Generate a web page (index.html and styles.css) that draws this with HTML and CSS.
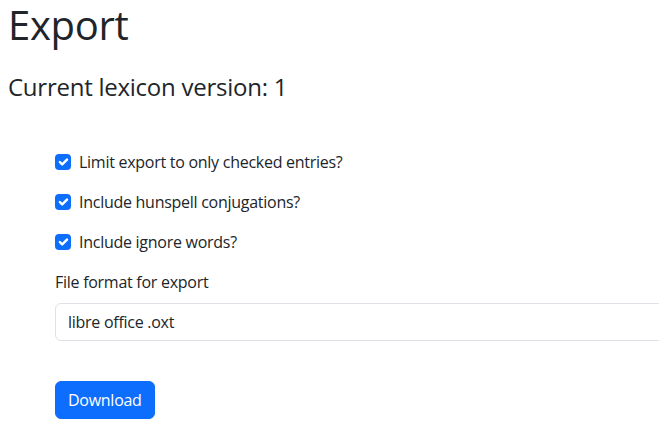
FILE: index.html
```html
<!DOCTYPE html>
<html lang="en">
<head>
<meta charset="utf-8">
<title>Export</title>
<link rel="stylesheet" href="styles.css">
</head>
<body>
<div class="page">
  <h1 class="title">Export</h1>
  <h4 class="version">Current lexicon version: 1</h4>
  <form class="export-form">
    <div class="check-row">
      <span class="check-box"><svg viewBox="0 0 20 20" width="16" height="16"><path d="m6 10 3 3 6-6" fill="none" stroke="#fff" stroke-width="3" stroke-linecap="round" stroke-linejoin="round"/></svg></span>
      <span class="check-label">Limit export to only checked entries?</span>
    </div>
    <div class="check-row">
      <span class="check-box"><svg viewBox="0 0 20 20" width="16" height="16"><path d="m6 10 3 3 6-6" fill="none" stroke="#fff" stroke-width="3" stroke-linecap="round" stroke-linejoin="round"/></svg></span>
      <span class="check-label">Include hunspell conjugations?</span>
    </div>
    <div class="check-row">
      <span class="check-box"><svg viewBox="0 0 20 20" width="16" height="16"><path d="m6 10 3 3 6-6" fill="none" stroke="#fff" stroke-width="3" stroke-linecap="round" stroke-linejoin="round"/></svg></span>
      <span class="check-label">Include ignore words?</span>
    </div>
    <label class="field-label" for="fmt">File format for export</label>
    <select class="format-select" id="fmt">
      <option>libre office .oxt</option>
    </select>
    <button type="button" class="btn-download">Download</button>
  </form>
</div>
</body>
</html>
```

FILE: styles.css
```css
html, body {
  margin: 0;
  overflow: hidden;
}
body {
  font-family: "Open Sans", "Noto Sans", sans-serif;
  font-size: 16px;
  line-height: 24px;
  letter-spacing: -0.27px;
  color: #212529;
  background: #fff;
}
.page {
  padding: 1px 8px 0;
}
.title {
  font-size: 40px;
  font-weight: 400;
  line-height: 48px;
  letter-spacing: -0.3px;
  margin: 0 0 24px;
}
.version {
  font-size: 24px;
  font-weight: 400;
  line-height: 28.8px;
  letter-spacing: -0.25px;
  margin: 0;
}
.export-form {
  padding: 48px 0 0 47px;
  display: flex;
  flex-direction: column;
  align-items: flex-start;
}
.check-row {
  display: flex;
  align-items: flex-start;
  height: 24px;
  margin-bottom: 16px;
}
.check-box {
  width: 16px;
  height: 16px;
  margin-top: 4px;
  margin-right: 8px;
  border-radius: 4px;
  background: #0d6efd;
  display: flex;
}
.check-label {
  color: #212529;
}
.field-label {
  margin-bottom: 9px;
}
.format-select {
  -webkit-appearance: none;
  appearance: none;
  width: 900px;
  height: 38px;
  box-sizing: border-box;
  padding: 6px 36px 6px 12px;
  font-family: inherit;
  font-size: 16px;
  line-height: 24px;
  letter-spacing: -0.27px;
  color: #212529;
  background: #fff;
  border: 1px solid #dee2e6;
  border-radius: 6px;
  margin: 0;
}
.btn-download {
  margin-top: 40px;
  font-family: inherit;
  font-size: 16px;
  line-height: 24px;
  letter-spacing: -0.27px;
  padding: 6px 12px;
  color: #fff;
  background: #0d6efd;
  border: 1px solid #0d6efd;
  border-radius: 6px;
}
```
